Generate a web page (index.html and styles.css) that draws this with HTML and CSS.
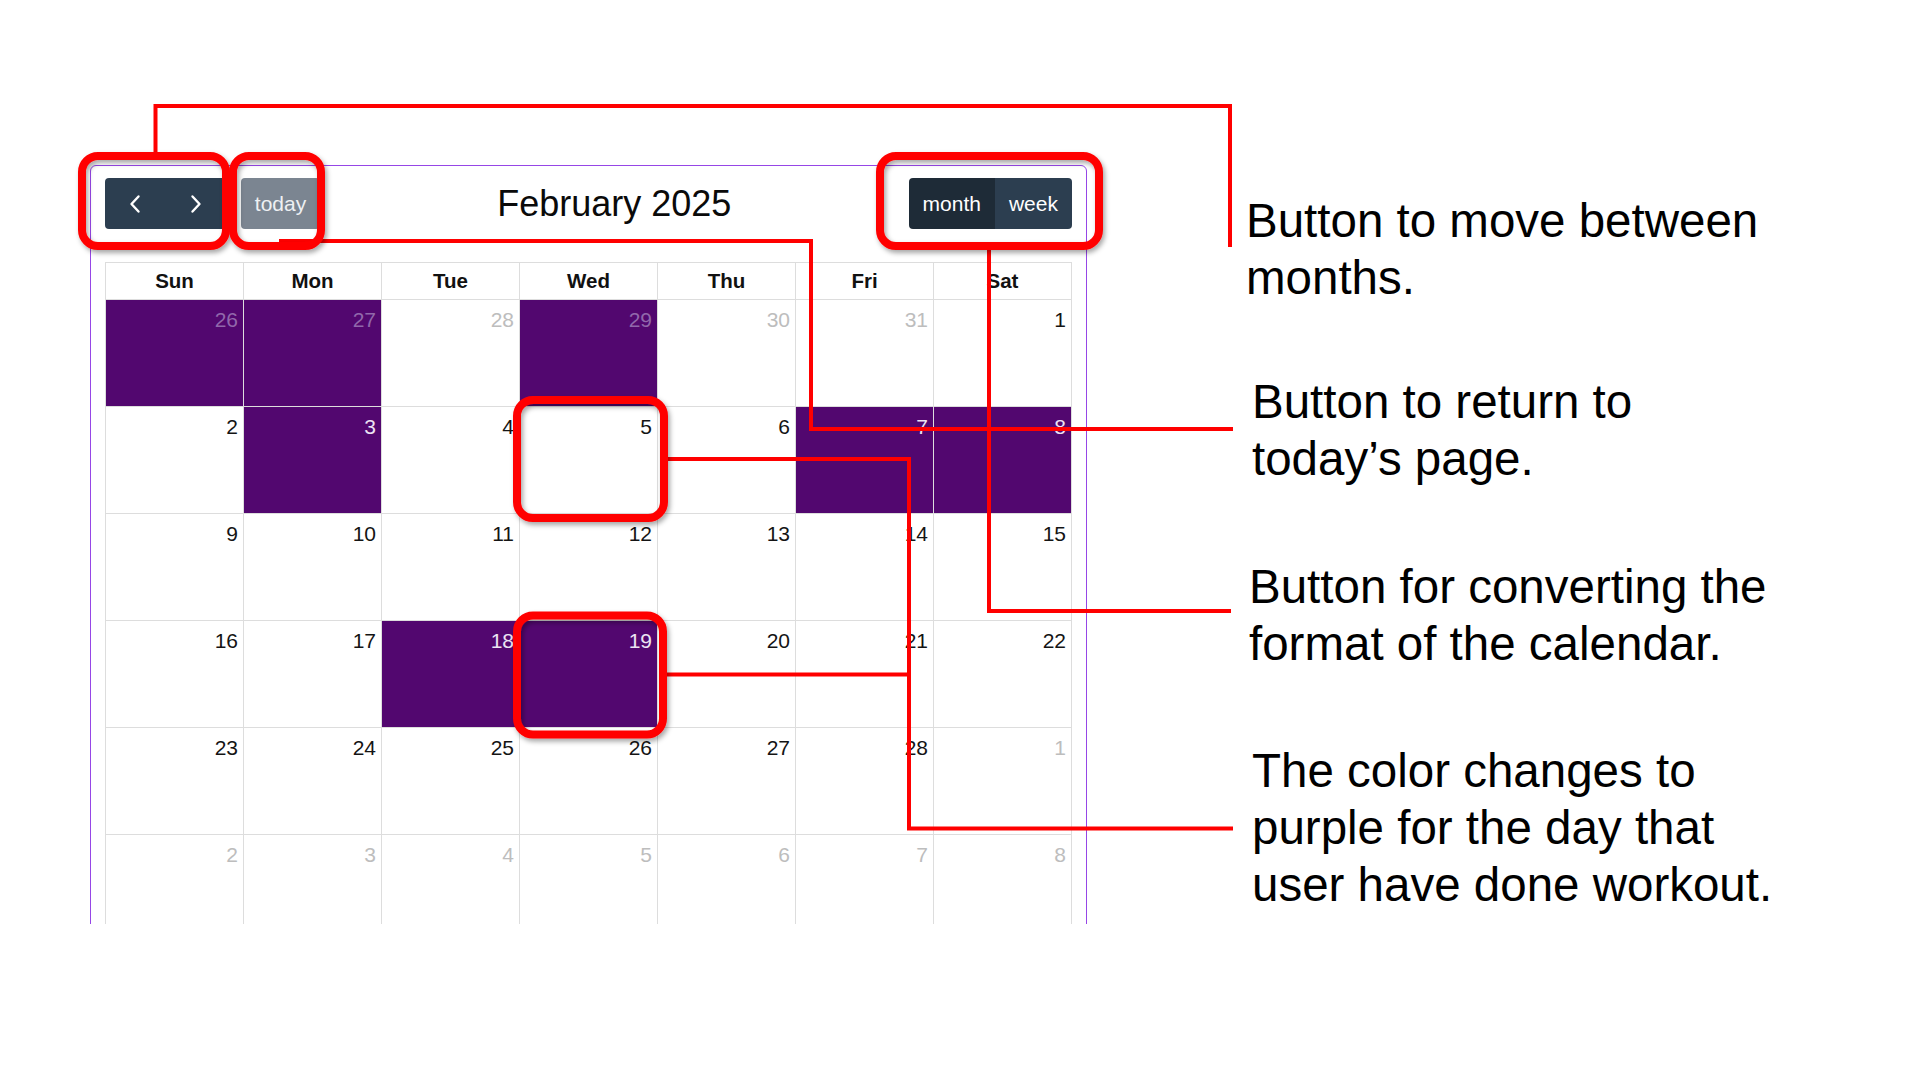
FILE: index.html
```html
<!DOCTYPE html>
<html lang="en">
<head>
<meta charset="utf-8">
<title>Workout calendar – annotated</title>
<link rel="stylesheet" href="styles.css">
</head>
<body>
<div class="slide">
  <div class="cal-clip">
    <div class="cal">
      <div class="toolbar">
        <div class="chunk">
          <div class="btn-group">
            <button class="btn btn-nav" aria-label="prev">
              <svg class="chev" viewBox="0 0 14 20" width="14" height="20"><path d="M10.5 2.5 L3.5 10 L10.5 17.5"/></svg>
            </button>
            <button class="btn btn-nav" aria-label="next">
              <svg class="chev" viewBox="0 0 14 20" width="14" height="20"><path d="M3.5 2.5 L10.5 10 L3.5 17.5"/></svg>
            </button>
          </div>
          <button class="btn btn-today">today</button>
        </div>
        <h2 class="title">February 2025</h2>
        <div class="btn-group">
          <button class="btn btn-active">month</button>
          <button class="btn">week</button>
        </div>
      </div>
      <div class="grid">
        <div class="hd">Sun</div><div class="hd">Mon</div><div class="hd">Tue</div><div class="hd">Wed</div><div class="hd">Thu</div><div class="hd">Fri</div><div class="hd">Sat</div>

        <div class="day other done"><span class="num">26</span></div>
        <div class="day other done"><span class="num">27</span></div>
        <div class="day other"><span class="num">28</span></div>
        <div class="day other done"><span class="num">29</span></div>
        <div class="day other"><span class="num">30</span></div>
        <div class="day other"><span class="num">31</span></div>
        <div class="day"><span class="num">1</span></div>

        <div class="day"><span class="num">2</span></div>
        <div class="day done"><span class="num">3</span></div>
        <div class="day"><span class="num">4</span></div>
        <div class="day"><span class="num">5</span></div>
        <div class="day"><span class="num">6</span></div>
        <div class="day done"><span class="num">7</span></div>
        <div class="day done"><span class="num">8</span></div>

        <div class="day"><span class="num">9</span></div>
        <div class="day"><span class="num">10</span></div>
        <div class="day"><span class="num">11</span></div>
        <div class="day"><span class="num">12</span></div>
        <div class="day"><span class="num">13</span></div>
        <div class="day"><span class="num">14</span></div>
        <div class="day"><span class="num">15</span></div>

        <div class="day"><span class="num">16</span></div>
        <div class="day"><span class="num">17</span></div>
        <div class="day done"><span class="num">18</span></div>
        <div class="day done"><span class="num">19</span></div>
        <div class="day"><span class="num">20</span></div>
        <div class="day"><span class="num">21</span></div>
        <div class="day"><span class="num">22</span></div>

        <div class="day"><span class="num">23</span></div>
        <div class="day"><span class="num">24</span></div>
        <div class="day"><span class="num">25</span></div>
        <div class="day"><span class="num">26</span></div>
        <div class="day"><span class="num">27</span></div>
        <div class="day"><span class="num">28</span></div>
        <div class="day other"><span class="num">1</span></div>

        <div class="day other"><span class="num">2</span></div>
        <div class="day other"><span class="num">3</span></div>
        <div class="day other"><span class="num">4</span></div>
        <div class="day other"><span class="num">5</span></div>
        <div class="day other"><span class="num">6</span></div>
        <div class="day other"><span class="num">7</span></div>
        <div class="day other"><span class="num">8</span></div>
      </div>
    </div>
  </div>

  <div class="notes">
    <p class="note n1">Button to move between<br>months.</p>
    <p class="note n2">Button to return to<br>today’s page.</p>
    <p class="note n3">Button for converting the<br>format of the calendar.</p>
    <p class="note n4">The color changes to<br>purple for the day that<br>user have done workout.</p>
  </div>

  <svg class="overlay" width="1919" height="1079" viewBox="0 0 1919 1079">
    <defs>
      <filter id="sh" x="-20%" y="-20%" width="140%" height="140%">
        <feDropShadow dx="2" dy="3" stdDeviation="2.5" flood-color="#000" flood-opacity="0.35"/>
      </filter>
    </defs>
    <g class="lines">
      <path d="M155.5 156 V106 H1230 V247"/>
      <path d="M279 241 H811 V429 H1233"/>
      <path d="M989 250 V611 H1231"/>
      <path d="M668 459 H909 V828.5 H1233"/>
      <path d="M667 674.5 H909"/>
    </g>
    <g class="boxes" filter="url(#sh)">
      <rect x="82" y="156" width="144" height="90" rx="16"/>
      <rect x="233" y="156" width="88" height="90" rx="16"/>
      <rect x="880" y="156" width="219" height="90" rx="16"/>
      <rect x="517" y="400" width="147" height="118" rx="16"/>
      <rect x="517" y="615.5" width="146" height="119" rx="16"/>
    </g>
  </svg>
</div>
</body>
</html>
```

FILE: styles.css
```css
* { box-sizing: border-box; }

html, body {
  margin: 0;
  padding: 0;
  background: #ffffff;
}

body {
  font-family: "Liberation Sans", Arial, sans-serif;
  color: #000;
}

.slide {
  position: relative;
  width: 1919px;
  height: 1079px;
  display: flex;
  align-items: flex-start;
  overflow: hidden;
}

/* ---------- calendar ---------- */
.cal-clip {
  margin-left: 90px;
  margin-top: 165px;
  width: 997px;
  height: 759px;
  overflow: hidden;
  flex: none;
}

.cal {
  border: 1px solid #9646e6;
  border-radius: 6px;
  padding: 12px 14px 20px 14px;
  background: #fff;
}

.toolbar {
  height: 51px;
  margin-bottom: 33px;
  display: flex;
  align-items: center;
  justify-content: space-between;
}

.chunk {
  display: flex;
  align-items: center;
  gap: 15px;
}

.btn-group {
  display: flex;
  border-radius: 4px;
  overflow: hidden;
}

.btn {
  height: 51px;
  border: 0;
  margin: 0;
  padding: 0 14px;
  background: #2c3e50;
  color: #fff;
  font-family: "Liberation Sans", Arial, sans-serif;
  font-size: 21px;
  line-height: 1;
  display: flex;
  align-items: center;
  justify-content: center;
}

.btn-nav {
  width: 60.5px;
  padding: 0;
}

.chev {
  display: block;
  fill: none;
  stroke: #ffffff;
  stroke-width: 2.4;
  stroke-linecap: round;
  stroke-linejoin: round;
}

.btn-today {
  width: 79px;
  border-radius: 4px;
  background: #7b8591;
  color: #eef0f3;
}

.btn-active {
  background: #1e2b37;
}

.title {
  margin: 0;
  font-size: 36px;
  font-weight: normal;
  line-height: 1;
  color: #0a0a0a;
}

.grid {
  display: grid;
  grid-template-columns: repeat(7, 138px);
  grid-template-rows: 37px repeat(6, 107px);
  width: 967px;
  border-left: 1px solid #dddddd;
  border-top: 1px solid #dddddd;
}

.hd {
  border-right: 1px solid #dddddd;
  border-bottom: 1px solid #dddddd;
  display: flex;
  align-items: center;
  justify-content: center;
  font-weight: bold;
  font-size: 20.5px;
  color: #111;
}

.day {
  border-right: 1px solid #dddddd;
  border-bottom: 1px solid #dddddd;
  display: flex;
  justify-content: flex-end;
  align-items: flex-start;
  padding: 8px 5px 0 0;
}

.num {
  font-size: 21px;
  line-height: 24px;
  color: #141414;
}

.day.other .num {
  color: #bdbdbd;
}

.day.done {
  background: #52076f;
}

.day.done .num {
  color: #ece3f3;
}

.day.done.other .num {
  color: #9167ab;
}

/* ---------- annotation labels ---------- */
.notes {
  margin-left: 162px;
  margin-top: 192px;
  display: flex;
  flex-direction: column;
}

.note {
  margin: 0;
  font-size: 47.5px;
  line-height: 57px;
  white-space: nowrap;
  color: #000;
}

.n1 { margin-left: -3px; }
.n2 { margin-top: 67px; margin-left: 3px; }
.n3 { margin-top: 71px; }
.n4 { margin-top: 70px; margin-left: 3px; }

/* ---------- red callouts overlay ---------- */
.overlay {
  position: absolute;
  left: 0;
  top: 0;
  pointer-events: none;
}

.lines path {
  fill: none;
  stroke: #ff0000;
  stroke-width: 4;
  stroke-linejoin: miter;
}

.boxes rect {
  fill: none;
  stroke: #ff0000;
  stroke-width: 8;
}
```
